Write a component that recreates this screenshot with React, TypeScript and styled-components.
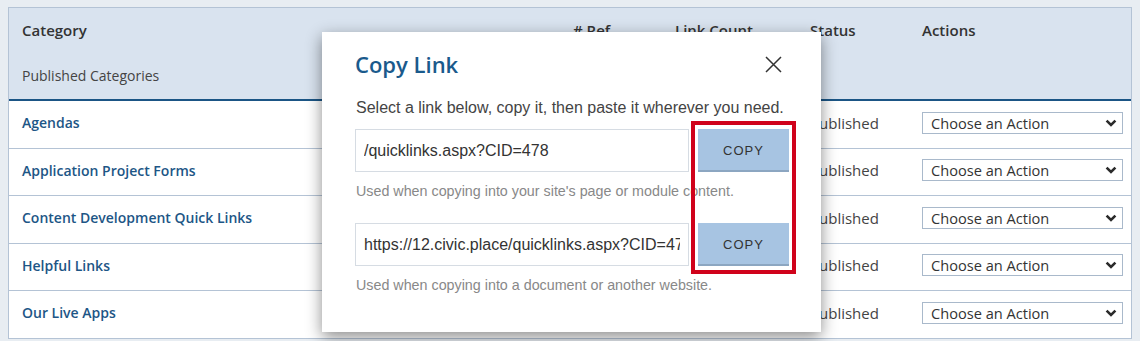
import React from "react";
import styled, { createGlobalStyle } from "styled-components";

const GlobalStyle = createGlobalStyle`
  html, body { margin: 0; padding: 0; }
  body {
    background: #e8edf2;
    font-family: "Open Sans", "Noto Sans", sans-serif;
    overflow: hidden;
  }
  * { box-sizing: border-box; }
`;

const Page = styled.div`
  position: relative;
  height: 341px;
  padding: 7px 8px 0 8px;
`;

const Table = styled.div`
  border: 1px solid #b4c3d5;
  border-bottom: none;
  background: #fff;
`;

const COLS = "551px 102px 135px 112px 1fr";

const HeadRow = styled.div`
  display: grid;
  grid-template-columns: ${COLS};
  padding-left: 13px;
  height: 45px;
  align-items: center;
  background: #d9e3ef;
`;

const SubHead = styled.div`
  display: grid;
  grid-template-columns: ${COLS};
  padding-left: 13px;
  padding-bottom: 1px;
  height: 48px;
  align-items: center;
  background: #d9e3ef;
  border-bottom: 2px solid #1b5585;
`;

const HeadCell = styled.div`
  font-size: 15px;
  font-weight: 600;
  color: #333;
  padding-bottom: 1px;
`;

const SubHeadCell = styled.div`
  font-size: 14px;
  color: #444;
`;

const Row = styled.div`
  display: grid;
  grid-template-columns: ${COLS};
  padding-left: 13px;
  padding-bottom: 3px;
  height: 47.5px;
  align-items: center;
  border-bottom: 1px solid #b4c3d5;
`;

const NameCell = styled.div`
  font-size: 14px;
  font-weight: 600;
  color: #1d5686;
`;

const StatusCell = styled.div`
  font-size: 15px;
  color: #444;
`;

const FakeSelect = styled.div`
  width: 201px;
  height: 22px;
  border: 1px solid #a9b9cb;
  display: flex;
  align-items: center;
  justify-content: space-between;
  padding: 0 5px 0 8px;
  font-size: 14.6px;
  color: #333;
  background: #fff;
`;

const Modal = styled.div`
  position: absolute;
  left: 322px;
  top: 32px;
  width: 499px;
  height: 300px;
  background: #fff;
  box-shadow: 0 5px 15px rgba(0, 0, 0, 0.45);
  padding: 16px 32px 0 33px;
  font-family: "Liberation Sans", Arial, sans-serif;
`;

const TitleBar = styled.div`
  display: flex;
  align-items: center;
  justify-content: space-between;
  height: 32px;
`;

const Title = styled.h2`
  margin: 0;
  font-family: "Open Sans", "Noto Sans", sans-serif;
  font-size: 22px;
  font-weight: 600;
  color: #1a5a8c;
`;

const CloseBtn = styled.button`
  border: none;
  background: none;
  padding: 0;
  margin-right: 7px;
  width: 18px;
  height: 18px;
  display: flex;
  align-items: center;
  justify-content: center;
  cursor: pointer;
`;

const Lead = styled.p`
  margin: 19px 0 12px 1px;
  font-size: 16px;
  line-height: 18px;
  color: #444;
`;

const LinkRow = styled.div`
  display: flex;
  gap: 9px;
  height: 43px;
`;

const LinkInput = styled.input`
  flex: 0 0 334px;
  width: 334px;
  border: 1px solid #d6dce3;
  padding: 0 8px 0 8px;
  margin: 0;
  font-family: "Liberation Sans", Arial, sans-serif;
  font-size: 16px;
  color: #333;
  background: #fff;
  outline: none;
`;

const CopyButton = styled.button`
  flex: 0 0 91px;
  border: none;
  border-bottom: 2px solid #8ca6c1;
  background: #a7c4e2;
  font-family: "Liberation Sans", Arial, sans-serif;
  font-size: 13px;
  letter-spacing: 1px;
  color: #333;
  padding: 2px 0 0 0;
`;

const Help = styled.p<{ $after: number }>`
  margin: 11px 0 ${(p) => p.$after}px 1px;
  font-size: 14.3px;
  line-height: 16px;
  color: #888;
`;

const Highlight = styled.div`
  position: absolute;
  left: 369px;
  top: 89px;
  width: 105px;
  height: 153px;
  border: 4px solid #d0021b;
  pointer-events: none;
`;

const rows = [
  "Agendas",
  "Application Project Forms",
  "Content Development Quick Links",
  "Helpful Links",
  "Our Live Apps",
];

const Chevron = () => (
  <svg width="12" height="8" viewBox="0 0 12 8">
    <path d="M1.6 1.6 L6 6 L10.4 1.6" fill="none" stroke="#2b2b2b" strokeWidth="2.6" />
  </svg>
);

export default function App() {
  return (
    <>
      <GlobalStyle />
      <Page>
        <Table>
          <HeadRow>
            <HeadCell>Category</HeadCell>
            <HeadCell># Ref</HeadCell>
            <HeadCell>Link Count</HeadCell>
            <HeadCell>Status</HeadCell>
            <HeadCell>Actions</HeadCell>
          </HeadRow>
          <SubHead>
            <SubHeadCell>Published Categories</SubHeadCell>
          </SubHead>
          {rows.map((r) => (
            <Row key={r}>
              <NameCell>{r}</NameCell>
              <div />
              <div />
              <StatusCell>Published</StatusCell>
              <FakeSelect>
                <span>Choose an Action</span>
                <Chevron />
              </FakeSelect>
            </Row>
          ))}
        </Table>
        <Modal>
          <TitleBar>
            <Title>Copy Link</Title>
            <CloseBtn aria-label="Close">
              <svg width="17" height="17" viewBox="0 0 17 17">
                <path d="M1 1 L16 16 M16 1 L1 16" stroke="#333" strokeWidth="1.5" fill="none" />
              </svg>
            </CloseBtn>
          </TitleBar>
          <Lead>Select a link below, copy it, then paste it wherever you need.</Lead>
          <LinkRow>
            <LinkInput readOnly value="/quicklinks.aspx?CID=478" />
            <CopyButton>COPY</CopyButton>
          </LinkRow>
          <Help $after={24}>Used when copying into your site's page or module content.</Help>
          <LinkRow>
            <LinkInput readOnly value="https://12.civic.place/quicklinks.aspx?CID=478" />
            <CopyButton>COPY</CopyButton>
          </LinkRow>
          <Help $after={0}>Used when copying into a document or another website.</Help>
          <Highlight />
        </Modal>
      </Page>
    </>
  );
}
